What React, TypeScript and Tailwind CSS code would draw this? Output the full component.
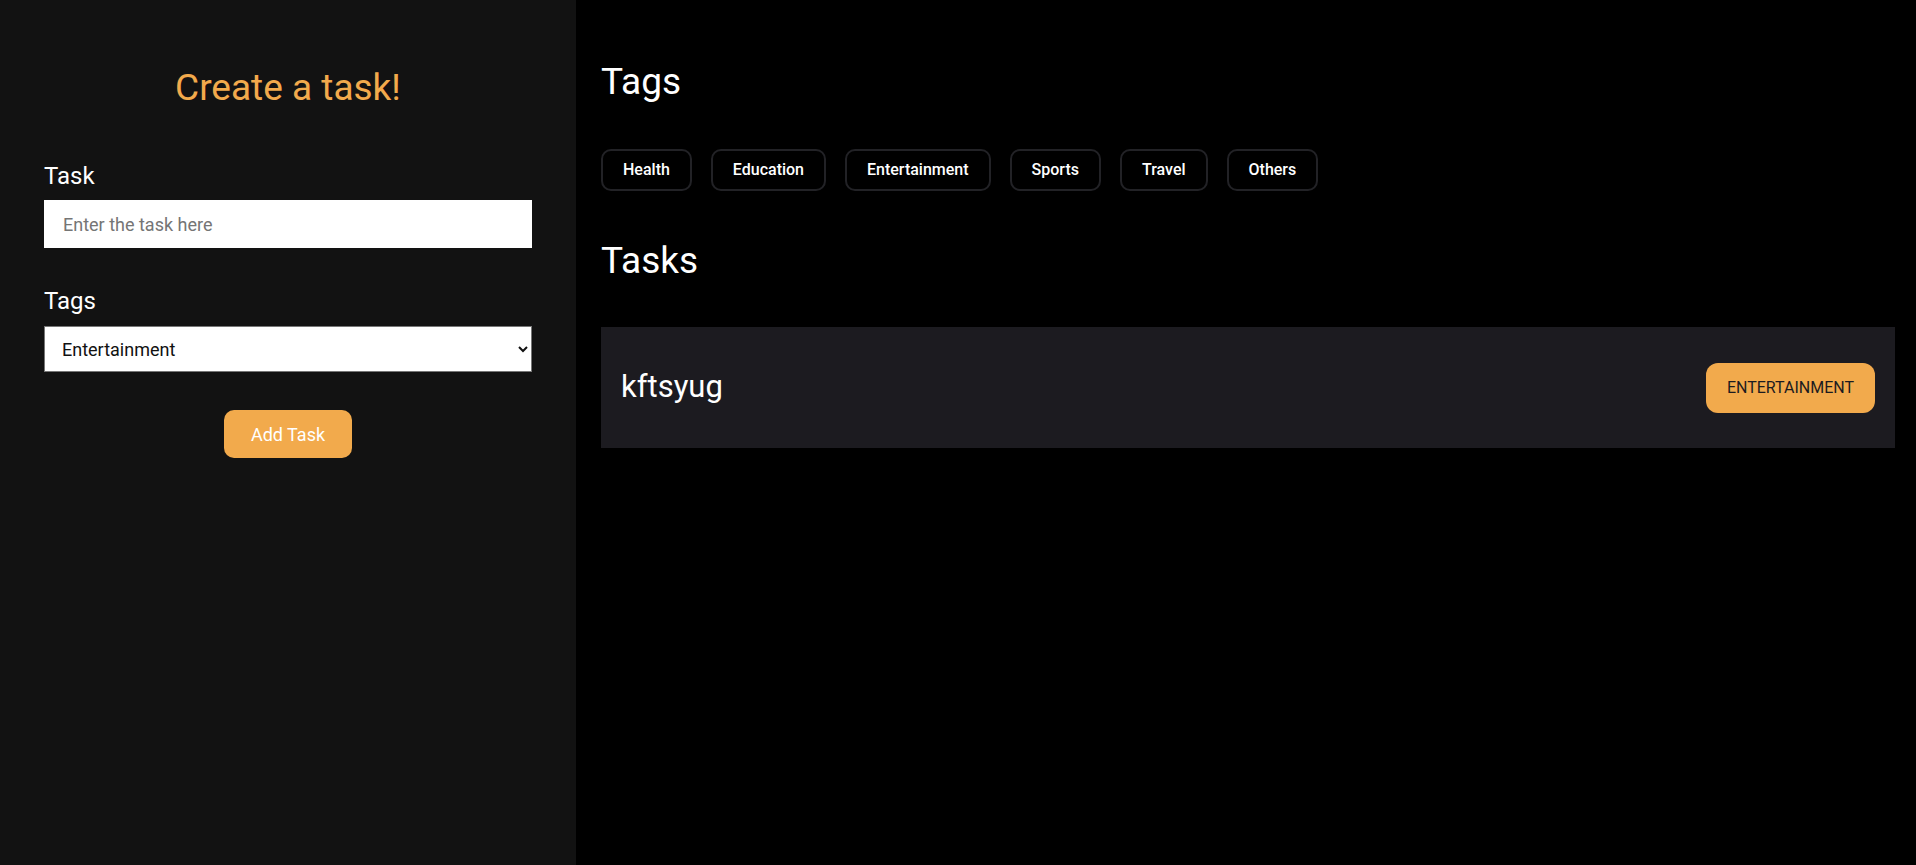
import React from "react";

const tags = ["Health", "Education", "Entertainment", "Sports", "Travel", "Others"];

export default function App() {
  return (
    <div className="flex h-[865px] w-full bg-black font-['Roboto',sans-serif]">
      <div className="flex w-[576px] shrink-0 flex-col bg-[#121212] px-[44px] pt-[67px]">
        <h1 className="text-center text-[37px] leading-[42px] font-normal text-[#f2aa4c]">Create a task!</h1>
        <label className="mt-[53px] text-[24px] leading-[28px] text-white">Task</label>
        <input
          className="mt-[10px] h-[48px] w-full bg-white pl-[19px] text-[18px] text-black outline-none placeholder:text-[#757575]"
          placeholder="Enter the task here"
        />
        <label className="mt-[39px] text-[24px] leading-[28px] text-white">Tags</label>
        <select
          defaultValue="Entertainment"
          className="mt-[11px] h-[46px] w-full border border-[#767676] bg-white pl-[13px] pr-[8px] text-[18px] text-[#111]"
        >
          {tags.map((t) => (
            <option key={t}>{t}</option>
          ))}
        </select>
        <div className="mt-[38px] flex justify-center">
          <button className="h-[48px] w-[128px] rounded-[10px] bg-[#f2aa4c] text-[18px] text-white">Add Task</button>
        </div>
      </div>
      <div className="flex flex-1 flex-col pl-[25px] pr-[21px] pt-[61px]">
        <h2 className="text-[37px] leading-[42px] text-white">Tags</h2>
        <div className="mt-[46px] flex gap-[19px]">
          {tags.map((t) => (
            <div
              key={t}
              className="flex h-[42px] items-center rounded-[10px] border-2 border-[#222226] px-[20px] text-[16px] font-medium text-white"
            >
              {t}
            </div>
          ))}
        </div>
        <h2 className="mt-[49px] text-[37px] leading-[42px] text-white">Tasks</h2>
        <div className="mt-[45px] flex h-[121px] items-center justify-between bg-[#1c1b20] pl-[20px] pr-[20px]">
          <span className="text-[31px] text-white">kftsyug</span>
          <span className="flex h-[50px] items-center rounded-[12px] bg-[#f2aa4c] px-[21px] text-[16px] font-normal text-[#1c1b20]">
            ENTERTAINMENT
          </span>
        </div>
      </div>
    </div>
  );
}
